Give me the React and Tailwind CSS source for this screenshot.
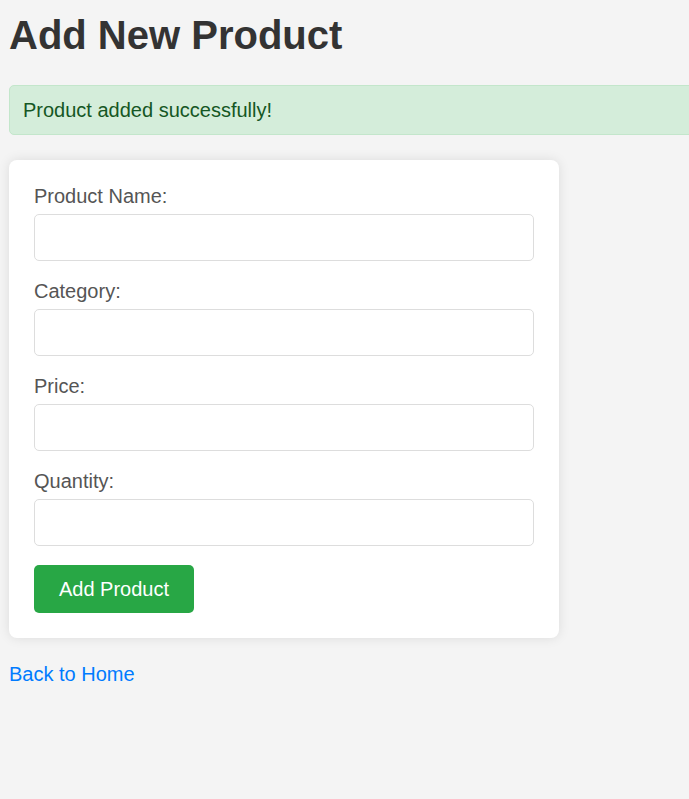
export default function App() {
  const fields = ["Product Name:", "Category:", "Price:", "Quantity:"];
  return (
    <div className="min-h-[799px] bg-[#f4f4f4] overflow-hidden font-['Liberation_Sans',Arial,sans-serif] text-[20px] text-[#333]">
      <div className="pl-[9px] pt-[12px]">
        <h1 className="text-[40px] font-bold leading-[46px] text-[#333] m-0">Add New Product</h1>
        <div className="mt-[27px] w-[720px] h-[50px] pl-[13px] pr-3 flex items-center bg-[#d4edda] border border-[#c3e6cb] rounded-[5px] text-[#155724] leading-[23px]">
          Product added successfully!
        </div>
        <div className="mt-[25px] w-[550px] bg-white rounded-[8px] p-[25px] shadow-[0_0_12px_rgba(0,0,0,0.1)]">
          <form className="flex flex-col" onSubmit={(e) => e.preventDefault()}>
            {fields.map((f) => (
              <div key={f} className="flex flex-col mb-[19px]">
                <label className="text-[#555] leading-[23px] mb-[6px]">{f}</label>
                <input type="text" className="h-[47px] w-full border border-[#ddd] rounded-[5px] bg-white px-3 outline-none" />
              </div>
            ))}
            <div>
              <button type="submit" className="w-[160px] h-[48px] bg-[#28a745] text-white rounded-[5px] leading-[23px]">
                Add Product
              </button>
            </div>
          </form>
        </div>
        <p className="mt-[25px] leading-[23px]">
          <a href="#" className="text-[#007bff]">Back to Home</a>
        </p>
      </div>
    </div>
  );
}
